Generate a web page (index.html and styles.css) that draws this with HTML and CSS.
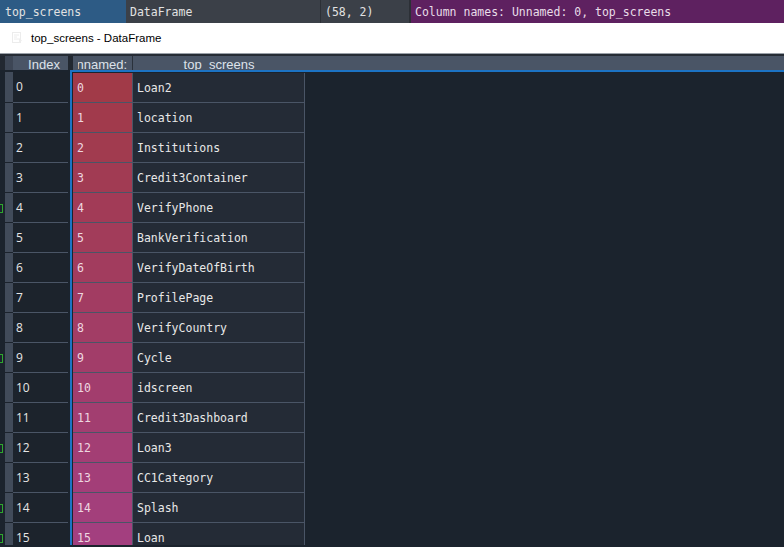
FILE: index.html
```html
<!DOCTYPE html>
<html>
<head>
<meta charset="utf-8">
<link rel="stylesheet" href="styles.css">
</head>
<body>
<div class="topbar">
  <div class="tb-cell tb-name">top_screens</div>
  <div class="tb-cell tb-type">DataFrame</div>
  <div class="tb-cell tb-size">(58, 2)</div>
  <div class="tb-cell tb-cols">Column names: Unnamed: 0, top_screens</div>
</div>
<div class="titlebar">
  <svg class="ticon" width="11" height="11" viewBox="0 0 11 11"><rect x="0.5" y="0.5" width="8" height="10" fill="none" stroke="#ececec"/><path d="M2 3h5M2 5h3M2 7h5" stroke="#ececec"/><path d="M7 6l3 2.5-3 2.5z" fill="#eeeeee"/></svg>
  <span class="ttext">top_screens - DataFrame</span>
</div>
<div class="gridsep"></div>
<div class="header">
  <div class="h-gutter"></div>
  <div class="h-strip"></div>
  <div class="h-index">Index</div>
  <div class="h-gap"></div>
  <div class="h-col h-c1"><div class="h-clip"><span>Unnamed: 0</span></div></div>
  <div class="h-col h-c2">top_screens</div>
  <div class="h-rest"></div>
</div>
<div class="blueline"></div>
<div class="body">
  <div class="index-pane">
    <div class="irow"><div class="gutter"></div><div class="strip"></div><div class="icell">0</div></div>
    <div class="irow"><div class="gutter"></div><div class="strip"></div><div class="icell">1</div></div>
    <div class="irow"><div class="gutter"></div><div class="strip"></div><div class="icell">2</div></div>
    <div class="irow"><div class="gutter"></div><div class="strip"></div><div class="icell">3</div></div>
    <div class="irow"><div class="gutter"><span class="mark"></span></div><div class="strip"></div><div class="icell">4</div></div>
    <div class="irow"><div class="gutter"></div><div class="strip"></div><div class="icell">5</div></div>
    <div class="irow"><div class="gutter"></div><div class="strip"></div><div class="icell">6</div></div>
    <div class="irow"><div class="gutter"></div><div class="strip"></div><div class="icell">7</div></div>
    <div class="irow"><div class="gutter"></div><div class="strip"></div><div class="icell">8</div></div>
    <div class="irow"><div class="gutter"><span class="mark"></span></div><div class="strip"></div><div class="icell">9</div></div>
    <div class="irow"><div class="gutter"></div><div class="strip"></div><div class="icell">10</div></div>
    <div class="irow"><div class="gutter"></div><div class="strip"></div><div class="icell">11</div></div>
    <div class="irow"><div class="gutter"><span class="mark"></span></div><div class="strip"></div><div class="icell">12</div></div>
    <div class="irow"><div class="gutter"></div><div class="strip"></div><div class="icell">13</div></div>
    <div class="irow"><div class="gutter"><span class="mark"></span></div><div class="strip"></div><div class="icell">14</div></div>
    <div class="irow"><div class="gutter"><span class="mark"></span></div><div class="strip"></div><div class="icell">15</div></div>
  </div>
  <div class="data-pane">
    <div class="drow"><div class="dnum" style="background:rgb(161,58,72)">0</div><div class="dtext">Loan2</div></div>
    <div class="drow"><div class="dnum" style="background:rgb(161,58,76)">1</div><div class="dtext">location</div></div>
    <div class="drow"><div class="dnum" style="background:rgb(161,59,79)">2</div><div class="dtext">Institutions</div></div>
    <div class="drow"><div class="dnum" style="background:rgb(161,59,83)">3</div><div class="dtext">Credit3Container</div></div>
    <div class="drow"><div class="dnum" style="background:rgb(162,59,87)">4</div><div class="dtext">VerifyPhone</div></div>
    <div class="drow"><div class="dnum" style="background:rgb(162,60,90)">5</div><div class="dtext">BankVerification</div></div>
    <div class="drow"><div class="dnum" style="background:rgb(162,60,94)">6</div><div class="dtext">VerifyDateOfBirth</div></div>
    <div class="drow"><div class="dnum" style="background:rgb(162,60,98)">7</div><div class="dtext">ProfilePage</div></div>
    <div class="drow"><div class="dnum" style="background:rgb(162,61,101)">8</div><div class="dtext">VerifyCountry</div></div>
    <div class="drow"><div class="dnum" style="background:rgb(162,61,105)">9</div><div class="dtext">Cycle</div></div>
    <div class="drow"><div class="dnum" style="background:rgb(162,61,109)">10</div><div class="dtext">idscreen</div></div>
    <div class="drow"><div class="dnum" style="background:rgb(162,62,112)">11</div><div class="dtext">Credit3Dashboard</div></div>
    <div class="drow"><div class="dnum" style="background:rgb(163,62,116)">12</div><div class="dtext">Loan3</div></div>
    <div class="drow"><div class="dnum" style="background:rgb(163,62,120)">13</div><div class="dtext">CC1Category</div></div>
    <div class="drow"><div class="dnum" style="background:rgb(163,63,123)">14</div><div class="dtext">Splash</div></div>
    <div class="drow"><div class="dnum" style="background:rgb(163,63,127)">15</div><div class="dtext">Loan</div></div>
  </div>
</div>
</body>
</html>
```

FILE: styles.css
```css
html, body {
  margin: 0;
  padding: 0;
  width: 784px;
  height: 547px;
  overflow: hidden;
  background: #1b232d;
}

.topbar {
  display: flex;
  height: 23px;
  font-family: "DejaVu Sans Mono", monospace;
  font-size: 11.5px;
  color: #e2e2e2;
}
.tb-cell {
  display: flex;
  align-items: center;
  padding-left: 5px;
  box-sizing: border-box;
  white-space: nowrap;
}
.tb-name { width: 126px; background: #2d5b85; }
.tb-type { width: 195px; background: #3b4048; border-right: 1px solid #2c3036; padding-left: 4px; }
.tb-size { width: 90px; background: #3b4048; border-right: 2px solid #2c3036; padding-left: 4px; }
.tb-cols { flex: 1; background: #5e2160; padding-left: 4px; color: #e8dde8; }

.titlebar {
  display: flex;
  align-items: center;
  height: 31px;
  background: #ffffff;
  box-sizing: border-box;
  padding-left: 12px;
  border-bottom: 1px solid #9aa0a8;
}
.ticon { margin-right: 8px; margin-top: -1px; }
.ttext {
  font-family: "Liberation Sans", Arial, sans-serif;
  font-size: 11.5px;
  color: #000;
}

.gridsep { height: 2px; background: #262c35; }

.header {
  display: flex;
  height: 14px;
  background: #222831;
  font-family: "Liberation Sans", Arial, sans-serif;
  font-size: 13px;
  color: #dde2ea;
  line-height: 17px;
  overflow: hidden;
}
.h-gutter { width: 5px; background: #222831; }
.h-strip { width: 8px; background: #3d4655; }
.h-index { width: 55px; background: #4a5566; text-align: center; padding-left: 7px; box-sizing: border-box; }
.h-gap { width: 5px; background: #222831; }
.h-col { background: #4a5566; overflow: hidden; white-space: nowrap; }
.h-c1 { width: 59px; border-right: 1px solid #2a313b; padding: 0 5px; box-sizing: border-box; width: 60px; }
.h-clip { display: flex; justify-content: center; overflow: hidden; width: 49px; }
.h-clip span { flex: none; }
.h-c2 { width: 172px; text-align: center; }
.h-rest { flex: 1; background: #4a5566; }

.blueline { height: 2px; background: #1c73c4; margin-left: 70px; }

.body {
  display: flex;
  height: 473px;
  overflow: hidden;
}
.index-pane {
  width: 70px;
  padding-top: 1px;
  margin-top: -2px;
}
.irow {
  display: flex;
  height: 30px;
}
.irow:first-child { height: 32px; }
.gutter {
  width: 5px;
  display: flex;
  align-items: center;
}
.mark {
  width: 2px;
  height: 7px;
  border: 1px solid #2ea82e;
  border-left: none;
  margin-top: 1px;
}
.strip {
  width: 8px;
  background: #414b5a;
  border-bottom: 1px solid #1b232d;
}
.icell {
  width: 55px;
  background: #1c232c;
  border-bottom: 1px solid #4a5566;
  box-sizing: border-box;
  padding-left: 3px;
  display: flex;
  align-items: center;
  font-family: "Open Sans", sans-serif;
  font-size: 12px;
  color: #e6e6e6;
}

.data-pane {
  border-left: 2px solid #1c73c4;
  padding-left: 1px;
  margin-top: -2px;
  padding-top: 3px;
  height: 475px;
  box-sizing: border-box;
}
.drow {
  display: flex;
  height: 30px;
  font-family: "DejaVu Sans Mono", monospace;
  font-size: 11.5px;
  color: #e8e8e8;
}
.dnum {
  width: 55px;
  border-bottom: 1px solid #4a5566;
  border-right: 1px solid #4a5566;
  padding-left: 4px;
  display: flex;
  align-items: center;
  color: #eed8e0;
}
.dtext {
  width: 167px;
  background: #242b36;
  border-bottom: 1px solid #4a5566;
  border-right: 1px solid #4a5566;
  padding-left: 4px;
  display: flex;
  align-items: center;
}
```
